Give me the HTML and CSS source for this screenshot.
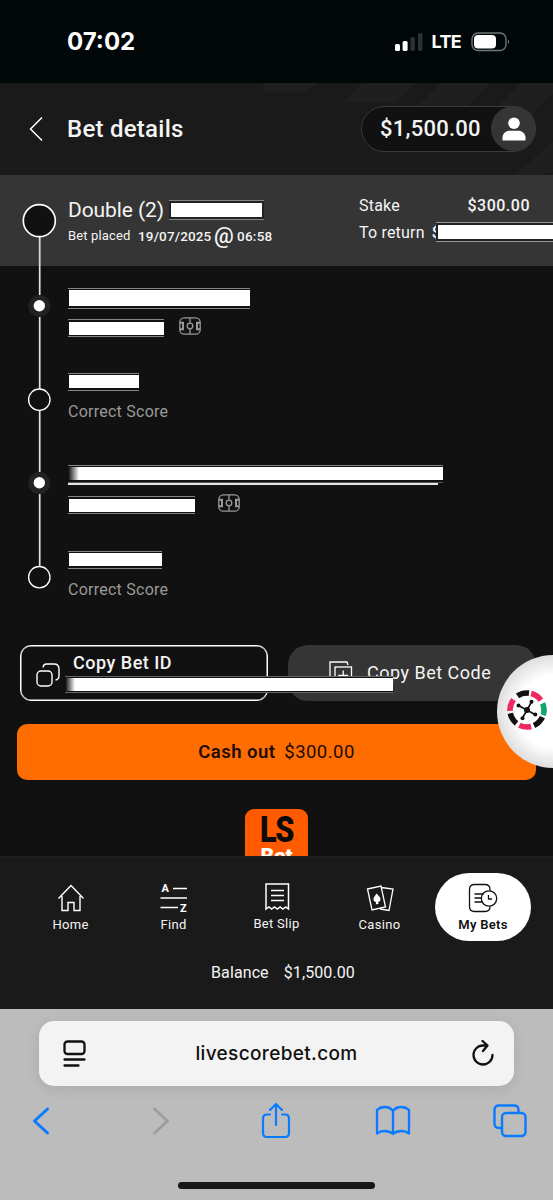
FILE: index.html
```html
<!DOCTYPE html>
<html lang="en">
<head>
<meta charset="utf-8">
<title>Bet details</title>
<link rel="stylesheet" href="styles.css">
</head>
<body>
<div class="phone">
  <div class="status">
    <span class="clock">07:02</span>
    <svg class="signal" width="29" height="20" viewBox="0 0 29 20"><rect x="0" y="12" width="5" height="7" rx="1.5" fill="#fff"/><rect x="7.6" y="9" width="5" height="10" rx="1.5" fill="#fff"/><rect x="15.4" y="5" width="4.500" height="14" rx="1.5" fill="#2b3233"/><rect x="23" y="1" width="4.500" height="18" rx="1.5" fill="#2b3233"/></svg>
    <span class="lte">LTE</span>
    <svg class="battery" width="39" height="20" viewBox="0 0 39 20"><rect x="1" y="1" width="34" height="17.500" rx="6" fill="none" stroke="#6f7777" stroke-width="1.4"/><rect x="3" y="3" width="22" height="13.500" rx="4" fill="#fff"/><path d="M37 7.500q2.500 2.300 0 4.800z" fill="#6f7777"/></svg>
  </div>

  <header class="header">
    <svg class="stripes" width="290" height="92" viewBox="0 0 290 92"><g fill="#1f1f1f"><path d="M0 0h54L44 9H0zM100 0h52l-20 20H80zM178 0h50l-32 31h-50zM258 0h32v10l-22 22h-42zM290 58v30l-10 4h-28z"/></g></svg>
    <svg class="back" width="14" height="26" viewBox="0 0 14 26"><path d="M13 1.500 1.500 13 13 24.500" fill="none" stroke="#fff" stroke-width="1.500"/></svg>
    <h1 class="title">Bet details</h1>
    <div class="wallet">
      <span class="wallet-sum">$1,500.00</span>
      <span class="avatar"><svg width="24" height="24" viewBox="0 0 24 24"><circle cx="12" cy="6.200" r="5.800" fill="#fff"/><path d="M.5 23.500v-3c0-4 4-6.700 7-6.700h9c3 0 7 2.700 7 6.700v3z" fill="#fff"/></svg></span>
    </div>
  </header>

  <section class="summary">
    <svg class="rail" width="68" height="91" viewBox="0 0 68 91"><path d="M39.700 62v29" stroke="#d8d8d8" stroke-width="1.800"/><circle cx="39.300" cy="45.700" r="16" fill="#111" stroke="#fff" stroke-width="1.700"/></svg>
    <div class="slip">
      <div class="slip-top"><span class="slip-name">Double (2)</span><span class="redact slip-redact"></span></div>
      <div class="slip-date"><span class="placed">Bet placed</span><b class="date">19/07/2025</b><b class="at">@</b><b class="time">06:58</b></div>
    </div>
    <div class="money">
      <div class="money-row"><span>Stake</span><b class="stake">$300.00</b></div>
      <div class="money-row"><span class="return-label">To return</span><b class="return">$<span class="redact return-redact"></span></b></div>
    </div>
  </section>

  <main class="content">
    <article class="leg">
      <svg class="rail" width="68" height="177" viewBox="0 0 68 177"><path d="M39.700 0v29M39.700 51v72M39.700 145v32" stroke="#e2e2e2" stroke-width="1.700"/><circle cx="39.300" cy="40" r="11" fill="#222"/><circle cx="39.300" cy="39.700" r="5.700" fill="#fff"/><circle cx="39.300" cy="133.700" r="10.700" fill="#111" stroke="#fff" stroke-width="1.300"/></svg>
      <div class="leg-info">
        <span class="redact bar-match"></span>
        <div class="leg-line"><span class="redact bar-league"></span><svg class="pitch" width="22" height="18" viewBox="0 0 22 18"><g fill="none" stroke="#999" stroke-width="1.300"><rect x=".8" y=".8" width="20.400" height="16.400" rx="4.500"/><path d="M11 1v4.800M11 12v5"/><circle cx="11" cy="9" r="2.800"/><path d="M1 5.800h3v6.400H1M21 5.800h-3v6.400H21" stroke-width="2"/></g></svg></div>
        <span class="redact bar-score"></span>
        <span class="market">Correct Score</span>
      </div>
    </article>
    <article class="leg">
      <svg class="rail" width="68" height="177" viewBox="0 0 68 177"><path d="M39.700 0v29M39.700 51v72" stroke="#e2e2e2" stroke-width="1.700"/><circle cx="39.300" cy="40" r="11" fill="#222"/><circle cx="39.300" cy="39.700" r="5.700" fill="#fff"/><circle cx="39.300" cy="134.200" r="10.700" fill="#111" stroke="#fff" stroke-width="1.300"/></svg>
      <div class="leg-info">
        <span class="redact bar-match long"></span>
        <span class="underline"></span>
        <div class="leg-line"><span class="redact bar-league wide"></span><svg class="pitch" width="22" height="18" viewBox="0 0 22 18"><g fill="none" stroke="#999" stroke-width="1.300"><rect x=".8" y=".8" width="20.400" height="16.400" rx="4.500"/><path d="M11 1v4.800M11 12v5"/><circle cx="11" cy="9" r="2.800"/><path d="M1 5.800h3v6.400H1M21 5.800h-3v6.400H21" stroke-width="2"/></g></svg></div>
        <span class="redact bar-score wide"></span>
        <span class="market">Correct Score</span>
      </div>
    </article>

    <div class="copy-row">
      <div class="copy-id">
        <svg class="copy-icon" width="24" height="24" viewBox="0 0 24 24"><g fill="none" stroke="#fff" stroke-width="1.400"><rect x="1" y="8" width="15" height="15" rx="4"/><path d="M7 4.500Q7.500 1 10.500 1H18q5 0 5 5v6.500q0 4-3.500 4.500"/></g></svg>
        <span class="copy-id-label">Copy Bet ID</span>
      </div>
      <div class="copy-code">
        <svg class="code-icon" width="24" height="24" viewBox="0 0 24 24"><g fill="none" stroke="#fff" stroke-width="1.300"><path d="M1 17V1h17l1 3"/><rect x="6" y="6" width="16.500" height="16.500"/><path d="M14.200 9.500v10M9.200 14.500h10"/></g></svg>
        <span class="copy-code-label">Copy Bet Code</span>
      </div>
      <span class="redact copy-redact"></span>
    </div>

    <div class="cashout"><b class="cash-label">Cash out</b><span class="cash-sum">$300.00</span></div>

    <div class="logo"><span class="logo-ls">LS</span><span class="logo-bet">Bet</span></div>

    <div class="casino-bubble">
      <svg width="42" height="42" viewBox="-21 -21 42 42">
        <g fill="none" stroke-width="5.600" stroke="#111"><circle r="17" stroke-dasharray="12 94.800" transform="rotate(-124)"/><circle r="17" stroke="#ee2860" stroke-dasharray="12 94.800" transform="rotate(-76)"/><circle r="17" stroke="#12a66b" stroke-dasharray="12 94.800" transform="rotate(-23)"/><circle r="17" stroke-dasharray="12 94.800" transform="rotate(25)"/><circle r="17" stroke="#ee2860" stroke-dasharray="12 94.800" transform="rotate(76)"/><circle r="17" stroke-dasharray="12 94.800" transform="rotate(128)"/><circle r="17" stroke="#ee2860" stroke-dasharray="12 94.800" transform="rotate(177)"/></g>
        <g fill="#111"><path d="M-8.500-4.500 8 4.500M4.500-8-4.500 8" stroke="#111" stroke-width="1.600"/><circle r="3"/><circle cx="-8.500" cy="-4.500" r="2"/><circle cx="8.300" cy="4.500" r="2"/><circle cx="4.500" cy="-8.200" r="2"/><circle cx="-4.500" cy="8.200" r="2"/></g>
      </svg>
    </div>
  </main>

  <nav class="nav">
    <div class="tabs">
      <div class="tab"><svg width="30" height="30" viewBox="0 0 30 30"><path d="M2.500 15.500 15 2.500l12.500 13M6 13v14.500h6v-8h6v8h6V13" fill="none" stroke="#fff" stroke-width="1.400"/></svg><span>Home</span></div>
      <div class="tab"><svg width="30" height="30" viewBox="0 0 30 30"><path d="M14 5.500H28M1.500 15H28M1.500 24.500H19" stroke="#fff" stroke-width="1.500"/><text x="2.500" y="9" class="az">A</text><text x="21" y="28.500" class="az">Z</text></svg><span>Find</span></div>
      <div class="tab tab-slip"><svg width="30" height="30" viewBox="0 0 30 30"><path d="M4 27V2h22.500v25l-2.800-2-2.800 2-2.800-2-2.800 2-2.800-2-2.800 2-2.800-2zM9 8.500h13M9 13.500h13M9 18.500h13" fill="none" stroke="#fff" stroke-width="1.500"/></svg><span>Bet Slip</span></div>
      <div class="tab"><svg width="30" height="30" viewBox="0 0 30 30"><g fill="none" stroke="#fff" stroke-width="1.300"><path d="M2.500 6 16 3l4.500 21L7 27zM16.500 4.500l11.500 1.500-4 21.500-9-1.500"/></g><path d="m11.500 10.500 3.500 3.800q1.500 4-2 4.700l.7 2-3 .3.500-2q-3.500-.8-2.500-4.500z" fill="#fff"/></svg><span>Casino</span></div>
      <div class="tab active"><svg width="30" height="30" viewBox="0 0 30 30"><g fill="none" stroke="#111" stroke-width="1.300"><path d="M22 8V6.500Q22 1.500 17 1.500H6.500Q1.500 1.500 1.500 6.500v17q0 5 5 5H17q5 0 5-5M6.500 11h9M6.500 15h7M6.500 19h8"/><circle cx="21" cy="15.500" r="7.700"/><path d="M20.500 12v4H24"/></g></svg><b>My Bets</b></div>
    </div>
    <div class="balance"><span>Balance</span><span>$1,500.00</span></div>
  </nav>

  <footer class="browser">
    <div class="address">
      <svg width="24" height="28" viewBox="0 0 24 28"><g fill="none" stroke="#111" stroke-width="2.300" stroke-linecap="round"><rect x="1.500" y="1.500" width="20" height="12.500" rx="3"/><path d="M1.500 19.500h20M1.500 25.500h14"/></g></svg>
      <span class="url">livescorebet.com</span>
      <svg width="24" height="28" viewBox="0 0 24 28"><path d="M21.500 15A9.500 9.500 0 1 1 12 5.500h4M11.500 1 16.500 5.500l-4.500 5.500" fill="none" stroke="#111" stroke-width="2.300" stroke-linecap="round" stroke-linejoin="round"/></svg>
    </div>
    <div class="tools">
      <svg width="18" height="30" viewBox="0 0 18 30"><path d="M15.500 3 2.500 15l13 12" fill="none" stroke="#087bff" stroke-width="3" stroke-linecap="round" stroke-linejoin="round"/></svg>
      <svg width="18" height="30" viewBox="0 0 18 30"><path d="m2.500 3 13 12-13 12" fill="none" stroke="#9d9d9d" stroke-width="2.800" stroke-linecap="round" stroke-linejoin="round"/></svg>
      <svg width="30" height="38" viewBox="0 0 30 38"><path d="M9 12.500H6q-4 0-4 4V31q0 4 4 4h18q4 0 4-4V16.500q0-4-4-4h-3M15 23V2M9 8l6-6 6 6" fill="none" stroke="#087bff" stroke-width="2.200" stroke-linecap="round" stroke-linejoin="round"/></svg>
      <svg width="36" height="32" viewBox="0 0 36 32"><path d="M18 6q-3-4-8-4-5 0-8 3v23.500Q5 26 9.500 26q5 0 8.500 3 3.500-3 8.500-3 4.500 0 7.500 2.500V5Q31 2 26 2q-5 0-8 4v23" fill="none" stroke="#087bff" stroke-width="2.300" stroke-linejoin="round"/></svg>
      <svg width="34" height="34" viewBox="0 0 34 34"><g fill="none" stroke="#087bff" stroke-width="2.400"><path d="M8.500 24H6q-4.500 0-4.500-4.500V6Q1.500 1.500 6 1.500h15q4.500 0 4.500 4.500v2.500"/><rect x="9" y="9" width="23.500" height="23" rx="4"/></g></svg>
    </div>
    <div class="home-bar"></div>
  </footer>
</div>
</body>
</html>
```
FILE: styles.css
```css
* { box-sizing: border-box; }
body { margin: 0; background: #111; color: #f4f4f4; font-family: Roboto, "Liberation Sans", sans-serif; }
svg { display: block; flex: none; }
.phone { width: 553px; height: 1200px; display: flex; flex-direction: column; overflow: hidden; }
.phone > * { flex: none; }

.status { height: 83px; background: #010708; display: flex; align-items: center; padding: 0 43px 0 67px; font-family: Inter, sans-serif; font-weight: 700; color: #fff; }
.clock { font-size: 24px; letter-spacing: 0; flex: 1; }
.lte { font-size: 18px; font-weight: 700; letter-spacing: -.7px; margin: 0 10px 0 8px; }

.header { height: 92px; background: #1a1a1a; display: flex; align-items: center; padding: 0 17px 1px 29px; position: relative; }
.stripes { position: absolute; right: 0; top: 0; }
.title { margin: 0 auto 0 24px; font-size: 24px; font-weight: 500; letter-spacing: .25px; }
.wallet { position: relative; width: 175px; height: 46px; border: 1px solid #3a3a3a; border-radius: 23px; background: #111; display: flex; align-items: center; justify-content: space-between; padding-left: 18px; }
.wallet-sum { font-size: 22px; font-weight: 500; letter-spacing: .25px; }
.avatar { width: 45px; height: 45px; border-radius: 50%; background: #353535; display: grid; place-items: center; margin-right: -1px; }

.redact { display: block; flex: none; background: #fff content-box; border: solid #858585; border-width: 1px 0; padding: 1px 0 1px 1px; }
.summary { height: 91px; background: #353535; display: flex; }
.rail { flex: none; }
.slip { width: 291px; padding-top: 22px; }
.slip-top { display: flex; align-items: center; height: 25px; }
.slip-name { width: 101px; font-size: 21px; letter-spacing: -.1px; white-space: nowrap; }
.slip-redact { width: 95px; height: 20px; padding-left: 2px; box-shadow: inset 0 0 0 2px #222; }
.slip-date { display: flex; align-items: center; height: 27px; font-size: 13px; white-space: nowrap; }
.slip-date b { font-weight: 500; }
.placed { width: 70px; letter-spacing: .15px; }
.slip-date .date { width: 76px; font-size: 13.500px; letter-spacing: .15px; }
.slip-date .at { width: 23px; font-size: 22px; line-height: 20px; }
.slip-date .time { font-size: 13.500px; letter-spacing: .25px; }
.money { padding-top: 17px; flex: 1; font-size: 16px; }
.money-row { display: flex; height: 27px; align-items: center; }
.money-row > span { letter-spacing: .2px; }
.money-row b { font-weight: 500; }
.stake { margin-left: auto; margin-right: 23px; letter-spacing: .5px; }
.return { position: relative; margin-left: 7px; }
.return-redact { position: absolute; left: 4px; top: -1px; width: 120px; height: 20px; padding-left: 2px; border-color: #999; box-shadow: inset 0 0 0 2px #222; }

.content { height: 590px; position: relative; overflow: hidden; }
.leg { height: 177px; display: flex; }
.leg-info { padding-top: 22px; display: flex; flex-direction: column; align-items: flex-start; }
.bar-match { width: 182px; height: 21px; padding-bottom: 2px; }
.bar-match.long { width: 375px; height: 18px; border-bottom-color: #555; background-image: linear-gradient(90deg, #222, #fff 10px); }
.underline { width: 370px; height: 2px; background: #e4e4e4; margin-bottom: 1px; }
.leg-line { display: flex; height: 28px; align-items: flex-end; margin-bottom: 36px; }
.bar-league { width: 96px; height: 18px; padding-top: 2px; }
.bar-league.wide { width: 127px; }
.pitch { margin: 0 0 2px 15px; }
.bar-league.wide + .pitch { margin-left: 23px; }
.bar-score { width: 71px; height: 18px; padding-bottom: 2px; }
.bar-score.wide { width: 94px; margin-top: 1px; margin-bottom: -1px; }
.market { margin-top: 11px; font-size: 16px; line-height: 20px; letter-spacing: .25px; color: #999; }
.bar-score.wide + .market { margin-top: 12px; }

.copy-row { position: relative; display: flex; gap: 20px; padding: 0 17px 0 20px; margin-top: 25px; height: 56px; }
.copy-id { width: 248px; border: 1.500px solid #fff; border-radius: 11px; display: flex; padding-left: 15px; box-shadow: inset 0 0 0 .5px #fff; }
.copy-icon { margin-top: 17px; }
.copy-id-label { font-size: 18px; font-weight: 500; margin: 6px 0 0 13px; letter-spacing: .5px; }
.copy-code { width: 248px; border-radius: 20px; background: #353535; display: flex; align-items: center; padding: 0 0 1px 41px; }
.copy-code-label { margin-left: 14px; font-size: 18px; letter-spacing: .5px; }
.copy-redact { position: absolute; left: 65px; top: 31px; width: 328px; height: 17px; background: linear-gradient(90deg, #222, #fff 9px) content-box, #111; border-color: #666; }
.cashout { margin: 23px 17px 0; height: 56px; border-radius: 10px; background: #ff6d00; color: #200c00; display: flex; align-items: center; justify-content: center; gap: 9px; font-size: 18.500px; letter-spacing: .45px; padding-bottom: 1px; }
.cash-label { font-weight: 600; }
.logo { width: 63px; height: 63px; margin: 29px auto 0; background: #ff5a00; border-radius: 9px; display: flex; flex-direction: column; align-items: center; font-weight: 900; }
.logo-ls { color: #0b0b0b; font-size: 36px; line-height: 42px; height: 37px; letter-spacing: -1.500px; transform: scaleX(.85); }
.logo-bet { color: #fff; font-size: 21px; line-height: 20px; }
.casino-bubble { position: absolute; left: 497px; top: 389px; width: 113px; height: 113px; border-radius: 50%; background: radial-gradient(circle at 50% 50%, #fff 45%, #d8d8d8 75%); padding: 34px 0 0 9px; }

.nav { height: 153px; background: #1a1a1a; border-top: 2px solid #202020; }
.tabs { display: flex; padding: 15px 0 0 19px; }
.tab { width: 103px; height: 68px; display: flex; flex-direction: column; align-items: center; padding-top: 10px; font-size: 13px; letter-spacing: .3px; }
.tab span, .tab b { line-height: 18px; margin-top: 3px; font-weight: 400; }
.tab.tab-slip { padding-top: 9px; }
.tab.active { width: 96px; margin-left: 4px; background: #fff; color: #111; border-radius: 34px; }
.tab.active b { font-weight: 600; letter-spacing: .3px; }
.az { font: 700 11px Roboto, sans-serif; fill: #fff; }
.balance { margin-top: 22px; display: flex; justify-content: center; gap: 15px; padding-left: 13px; font-size: 16px; line-height: 19px; letter-spacing: .1px; }

.browser { height: 191px; background: #bcbcbc; padding-top: 12px; display: flex; flex-direction: column; }
.address { margin-left: 39px; width: 475px; height: 65px; border-radius: 15px; background: #f3f3f3; box-shadow: 0 3px 14px #00000018; display: flex; align-items: center; justify-content: space-between; padding: 0 19px 0 24px; }
.url { font: 500 19px Inter, sans-serif; color: #111; letter-spacing: .35px; margin-right: 5px; }
.tools { height: 70px; display: grid; grid-template-columns: 81px 160px 70px 164px 70px; align-items: center; justify-items: center; }
.home-bar { width: 197px; height: 7px; border-radius: 4px; background: #171717; margin: 26px auto 0; }
```
